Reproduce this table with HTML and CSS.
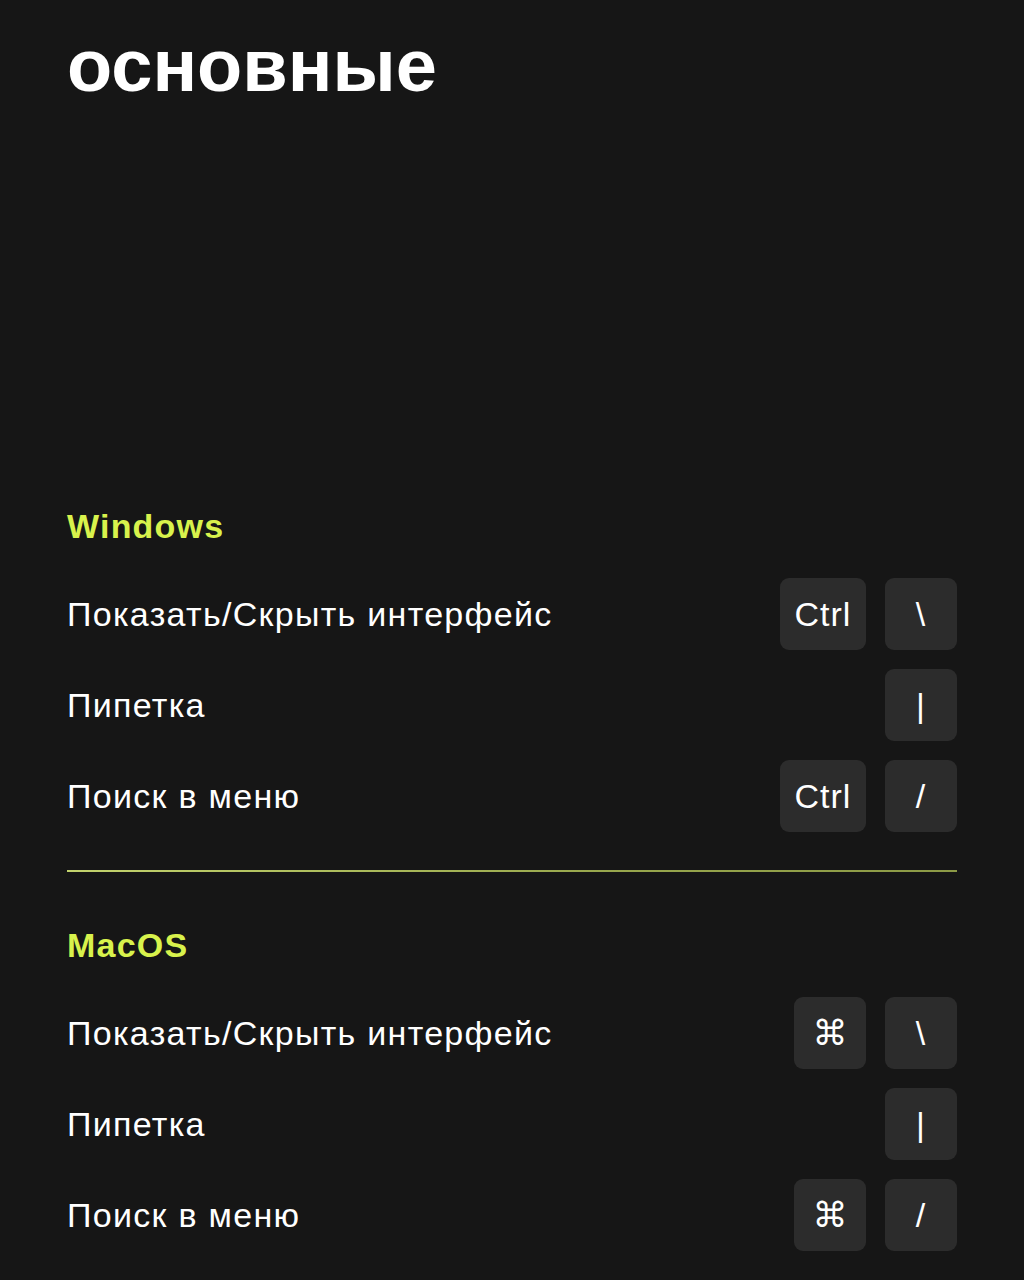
FILE: index.html
```html
<!DOCTYPE html>
<html lang="ru">
<head>
<meta charset="utf-8">
<title>основные</title>
<link rel="stylesheet" href="styles.css">
</head>
<body>
<main class="page">
  <h1 class="title">основные</h1>

  <section class="group group-first">
    <h2 class="group-title">Windows</h2>
    <ul class="rows">
      <li class="row"><span class="label">Показать/Скрыть интерфейс</span><span class="keys"><kbd class="key key-wide">Ctrl</kbd><kbd class="key">\</kbd></span></li>
      <li class="row"><span class="label">Пипетка</span><span class="keys"><kbd class="key">|</kbd></span></li>
      <li class="row"><span class="label">Поиск в меню</span><span class="keys"><kbd class="key key-wide">Ctrl</kbd><kbd class="key">/</kbd></span></li>
    </ul>
  </section>

  <hr class="divider">

  <section class="group">
    <h2 class="group-title">MacOS</h2>
    <ul class="rows">
      <li class="row"><span class="label">Показать/Скрыть интерфейс</span><span class="keys"><kbd class="key key-cmd">⌘</kbd><kbd class="key">\</kbd></span></li>
      <li class="row"><span class="label">Пипетка</span><span class="keys"><kbd class="key">|</kbd></span></li>
      <li class="row"><span class="label">Поиск в меню</span><span class="keys"><kbd class="key key-cmd">⌘</kbd><kbd class="key">/</kbd></span></li>
    </ul>
  </section>
</main>
</body>
</html>
```

FILE: styles.css
```css
html, body {
  margin: 0;
  padding: 0;
  background: #161616;
}

body {
  color: #ffffff;
  font-family: "Liberation Sans", Arial, sans-serif;
}

.page {
  padding: 30px 67px 0 67px;
  width: 890px;
}

.title {
  margin: 0;
  font-family: "Liberation Sans", Arial, sans-serif;
  font-weight: 700;
  font-size: 74px;
  line-height: 72px;
  height: 72px;
  letter-spacing: 0;
}

.group-first {
  margin-top: 407px;
}

.group-title {
  margin: 0;
  font-size: 34px;
  line-height: 34px;
  font-weight: 700;
  color: #d8f24c;
  letter-spacing: 1.2px;
}

.rows {
  list-style: none;
  margin: 35px 0 0 0;
  padding: 0;
  display: flex;
  flex-direction: column;
  gap: 19px;
}

.row {
  display: flex;
  align-items: center;
  justify-content: space-between;
  height: 72px;
}

.label {
  font-size: 34px;
  line-height: 40px;
  letter-spacing: 1.3px;
}

.keys {
  display: flex;
  gap: 19px;
}

.key {
  display: flex;
  align-items: center;
  justify-content: center;
  min-width: 72px;
  height: 72px;
  box-sizing: border-box;
  border-radius: 9px;
  background: #2c2c2c;
  color: #ffffff;
  font-family: "Liberation Sans", Arial, sans-serif;
  font-size: 34px;
  line-height: 1;
  letter-spacing: 1px;
}

.key-wide {
  width: 86px;
}

.key-cmd {
  font-family: "DejaVu Sans", sans-serif;
  font-size: 35px;
  letter-spacing: 0;
}

.divider {
  margin: 38px 0 0 0;
  border: 0;
  height: 2px;
  background: linear-gradient(90deg, #c3d36d, #98a74d 60%, #8c9a46);
}

.divider + .group {
  margin-top: 56px;
}
```
